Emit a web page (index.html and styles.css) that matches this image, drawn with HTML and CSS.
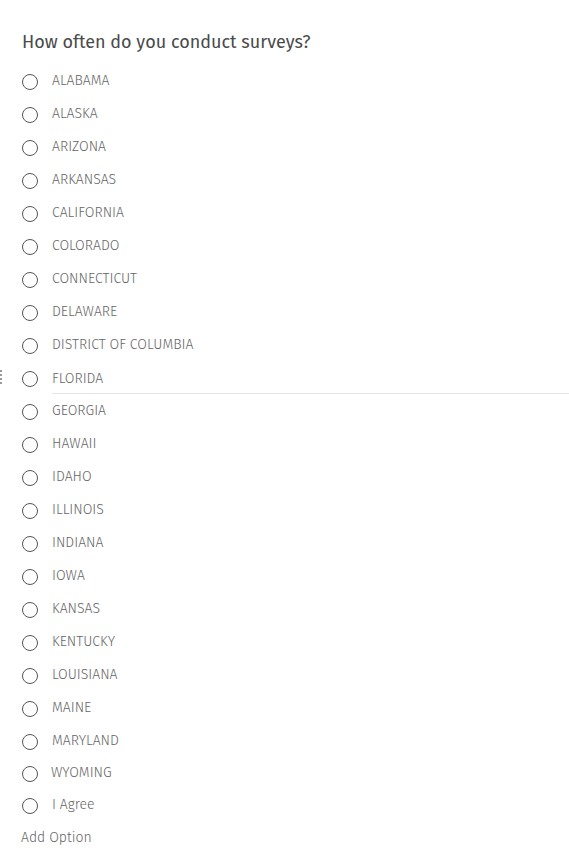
FILE: index.html
```html
<!DOCTYPE html>
<html>
<head>
<meta charset="utf-8">
<link rel="stylesheet" href="styles.css">
</head>
<body>
<div class="question">
  <h1 class="title">How often do you conduct surveys?</h1>
  <ul class="options">
    <li class="option"><span class="radio"></span><span class="label">ALABAMA</span></li>
    <li class="option"><span class="radio"></span><span class="label">ALASKA</span></li>
    <li class="option"><span class="radio"></span><span class="label">ARIZONA</span></li>
    <li class="option"><span class="radio"></span><span class="label">ARKANSAS</span></li>
    <li class="option"><span class="radio"></span><span class="label">CALIFORNIA</span></li>
    <li class="option"><span class="radio"></span><span class="label">COLORADO</span></li>
    <li class="option"><span class="radio"></span><span class="label">CONNECTICUT</span></li>
    <li class="option"><span class="radio"></span><span class="label">DELAWARE</span></li>
    <li class="option"><span class="radio"></span><span class="label">DISTRICT OF COLUMBIA</span></li>
    <li class="option active"><span class="handle"><i></i><i></i><i></i><i></i></span><span class="radio"></span><span class="label">FLORIDA</span></li>
    <li class="option"><span class="radio"></span><span class="label">GEORGIA</span></li>
    <li class="option"><span class="radio"></span><span class="label">HAWAII</span></li>
    <li class="option"><span class="radio"></span><span class="label">IDAHO</span></li>
    <li class="option"><span class="radio"></span><span class="label">ILLINOIS</span></li>
    <li class="option"><span class="radio"></span><span class="label">INDIANA</span></li>
    <li class="option"><span class="radio"></span><span class="label">IOWA</span></li>
    <li class="option"><span class="radio"></span><span class="label">KANSAS</span></li>
    <li class="option"><span class="radio"></span><span class="label">KENTUCKY</span></li>
    <li class="option"><span class="radio"></span><span class="label">LOUISIANA</span></li>
    <li class="option"><span class="radio"></span><span class="label">MAINE</span></li>
    <li class="option"><span class="radio"></span><span class="label">MARYLAND</span></li>
    <li class="option short"><span class="radio"></span><span class="label">WYOMING</span></li>
    <li class="option"><span class="radio"></span><span class="label">I Agree</span></li>
  </ul>
  <div class="add">Add Option</div>
</div>
</body>
</html>
```
FILE: styles.css
```css
html, body {
  margin: 0;
  padding: 0;
  background: #fff;
}
body {
  font-family: "Fira Sans", Roboto, "Liberation Sans", sans-serif;
}
.question {
  padding: 30px 0 0 0;
}
.title {
  margin: 0 0 10px 22px;
  font-size: 18px;
  line-height: 24px;
  font-weight: 400;
  color: #4a4a4a;
}
.options {
  list-style: none;
  margin: 0;
  padding: 0;
}
.option {
  position: relative;
  display: flex;
  align-items: center;
  height: 33px;
  padding-left: 22px;
}
.option.short {
  height: 31px;
}
.short .radio {
  margin-right: 13px;
}
.radio {
  flex: none;
  width: 14px;
  height: 14px;
  border: 1.1px solid #555;
  border-radius: 50%;
  margin-right: 14px;
  position: relative;
  top: 1px;
}
.label {
  flex: 1;
  font-size: 14px;
  font-weight: 300;
  color: #666;
  line-height: 33px;
  height: 33px;
  box-sizing: border-box;
}
.active .label {
  border-bottom: 1px solid #e6e6e6;
  line-height: 33px;
  height: 32px;
}
.handle {
  position: absolute;
  left: 0;
  top: 9px;
  display: flex;
  flex-direction: column;
  gap: 2px;
}
.handle i {
  display: block;
  width: 2px;
  height: 2px;
  background: #999;
}
.add {
  margin-left: 21px;
  font-size: 14px;
  font-weight: 300;
  line-height: 33px;
  color: #666;
}
```
